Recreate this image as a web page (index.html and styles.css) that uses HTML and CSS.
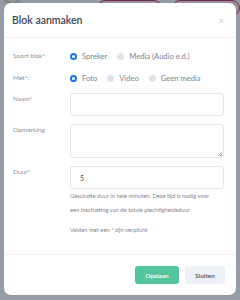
FILE: index.html
```html
<!DOCTYPE html>
<html lang="nl">
<head>
<meta charset="utf-8">
<link rel="stylesheet" href="styles.css">
</head>
<body>
<div class="page">
  <div class="page-bar">
    <span class="crumb">Mijn [ AS]</span>
    <span class="bg-btn bg-btn-a"></span>
    <span class="bg-btn bg-btn-b"></span>
  </div>
</div>
<div class="modal">
  <div class="modal-header">
    <h5 class="modal-title">Blok aanmaken</h5>
    <span class="close">×</span>
  </div>
  <div class="modal-body">
    <div class="row row-radio first">
      <div class="label">Soort blok*</div>
      <div class="control radios">
        <span class="radio"><span class="dot checked"></span>Spreker</span>
        <span class="radio"><span class="dot"></span>Media (Audio e.d.)</span>
      </div>
    </div>
    <div class="row row-radio">
      <div class="label">Met*:</div>
      <div class="control radios">
        <span class="radio"><span class="dot checked"></span>Foto</span>
        <span class="radio"><span class="dot"></span>Video</span>
        <span class="radio"><span class="dot"></span>Geen media</span>
      </div>
    </div>
    <div class="row">
      <div class="label pad">Naam*</div>
      <div class="control"><div class="input"></div></div>
    </div>
    <div class="row">
      <div class="label pad">Opmerking</div>
      <div class="control"><div class="input textarea"><span class="grip"></span></div></div>
    </div>
    <div class="row">
      <div class="label pad">Duur*</div>
      <div class="control">
        <div class="input"><span class="value">5</span></div>
        <p class="help">Geschatte duur in hele minuten. Deze tijd is nodig voor een inschatting van de totale plechtigheidsduur</p>
        <p class="help req">Velden met een * zijn verplicht</p>
      </div>
    </div>
  </div>
  <div class="modal-footer">
    <button class="btn btn-save">Opslaan</button>
    <button class="btn btn-close">Sluiten</button>
  </div>
</div>
</body>
</html>
```

FILE: styles.css
```css
* { box-sizing: border-box; }
html, body {
  margin: 0;
  padding: 0;
  width: 240px;
  height: 300px;
  overflow: hidden;
}
body {
  background: #969ca3;
  font-family: "Lato", "Open Sans", sans-serif;
  position: relative;
}
.page-bar {
  display: flex;
  align-items: flex-start;
  height: 20px;
  padding-left: 4px;
}
.crumb {
  font-size: 4px;
  color: #5d636b;
  line-height: 4px;
  margin-top: 0;
  width: 96px;
}
.bg-btn {
  height: 16px;
  border: 1px solid #6e2a4e;
  border-radius: 8px;
  background: #9c8e98;
  margin-top: 0;
}
.bg-btn-a { width: 66px; margin-left: 0; }
.bg-btn-b { width: 70px; margin-left: 10px; }

.modal {
  position: absolute;
  top: 3px;
  left: 4px;
  width: 232px;
  height: 292px;
  background: #fff;
  border-radius: 7px;
  display: flex;
  flex-direction: column;
  color: #3c4257;
}
.modal-header {
  height: 35px;
  display: flex;
  align-items: center;
  justify-content: space-between;
  padding: 0 12px 0 8px;
  border-bottom: 1px solid #eef0f3;
}
.modal-title {
  margin: 0;
  font-size: 10.5px;
  font-weight: 600;
  color: #3c4257;
}
.close {
  font-size: 9px;
  color: #c5c9cf;
  line-height: 9px;
}
.modal-body {
  flex: 1;
  padding: 13px 12px 0 9px;
}
.row {
  display: flex;
  margin-bottom: 8px;
}
.row-radio { margin-bottom: 12px; height: 10px; }
.row-radio + .row-radio { margin-bottom: 10px; }
.label {
  width: 57px;
  flex: none;
  font-size: 6.5px;
  color: #8990a0;
  line-height: 10px;
}
.label.pad { padding-top: 1px; }
.control { flex: 1; }
.radios {
  display: flex;
  align-items: center;
  height: 10px;
  font-size: 7.6px;
  color: #7d8596;
}
.radio {
  display: flex;
  align-items: center;
  margin-right: 10px;
}
.dot {
  width: 7px;
  height: 7px;
  border-radius: 50%;
  background: #dfe4ec;
  margin-right: 5px;
  flex: none;
}
.dot.checked {
  background: #fff;
  border: 2px solid #1a73e8;
}
.input {
  height: 23px;
  border: 1px solid #e3e6ea;
  border-radius: 3px;
  position: relative;
  display: flex;
  align-items: center;
  padding-left: 9px;
  width: 154px;
}
.textarea { height: 34px; }
.grip {
  position: absolute;
  right: 1px;
  bottom: 1px;
  width: 4px;
  height: 4px;
  background: linear-gradient(135deg, transparent 45%, #aaa 45%, #aaa 55%, transparent 55%, transparent 75%, #aaa 75%);
}
.value {
  font-size: 7px;
  color: #4a5061;
}
.help {
  margin: 0;
  font-size: 5.8px;
  line-height: 14px;
  color: #7e8594;
  padding-top: 0;
  width: 146px;
}
.req { margin-top: 6px; }
.modal-footer {
  height: 41px;
  border-top: 1px solid #f1f2f4;
  display: flex;
  justify-content: flex-end;
  align-items: flex-start;
  padding: 11px 11px 0 0;
  gap: 6px;
}
.btn {
  height: 18px;
  border: none;
  border-radius: 3px;
  font-family: inherit;
  font-size: 6.5px;
  font-weight: 600;
  padding: 0;
}
.btn-save {
  width: 44px;
  background: #52c59f;
  color: #fff;
}
.btn-close {
  width: 40px;
  background: #eef1f6;
  color: #4a5061;
}
```
